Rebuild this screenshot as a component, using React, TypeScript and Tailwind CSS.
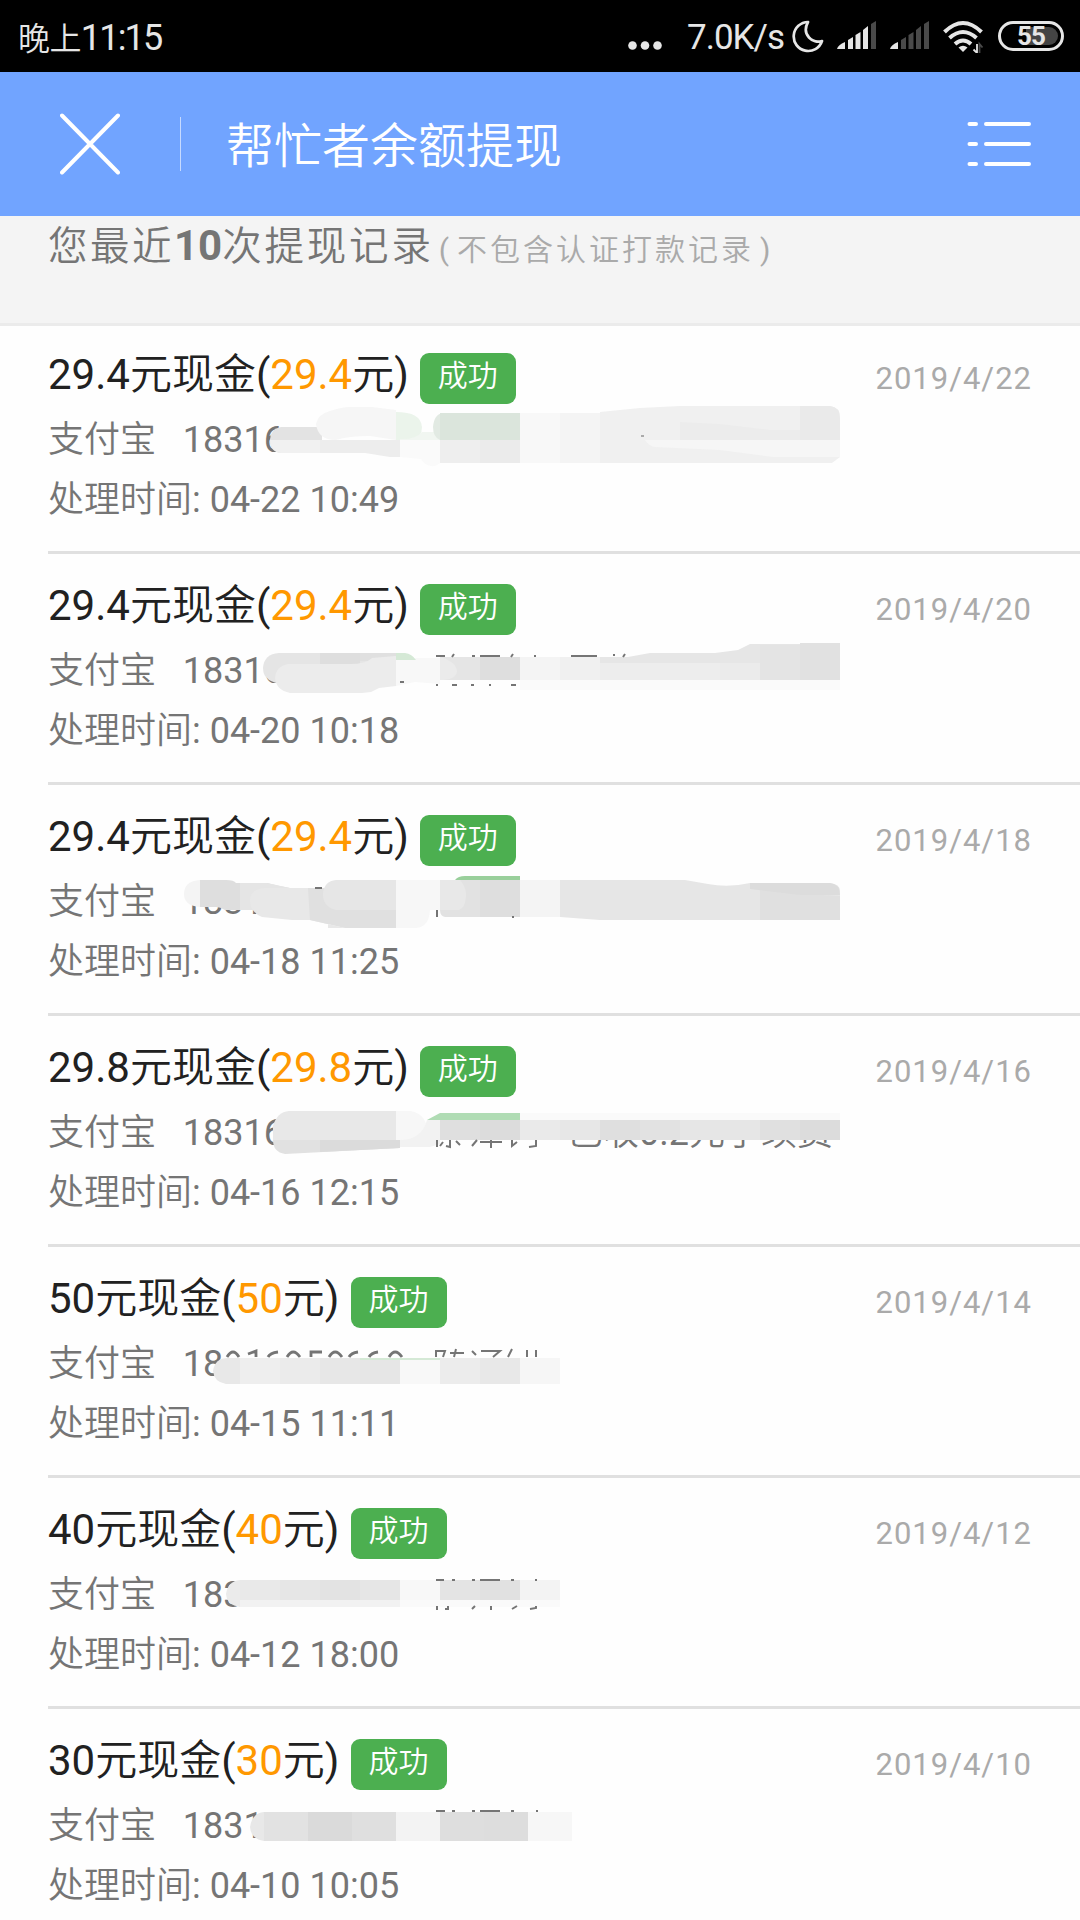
import React from "react";

type Cell = [x: number, y: number, w: number, h: number, fill: string];

const Cells = ({ items }: { items: Cell[] }) => (
  <>
    {items.map(([x, y, w, h, fill], i) => (
      <rect key={i} x={x} y={y} width={w} height={h} fill={fill} shapeRendering="crispEdges" />
    ))}
  </>
);

const Marks = ({ d }: { d: string }) => <path d={d} stroke="#757575" strokeWidth="2" fill="none" />;

const smudges = [
  <>
    <path d="M281 427H322V453H281Q270 452 270 440Q270 429 281 427Z" fill="#e3e3e3" />
    <path d="M270 440H400V457H390L365 453H281Q271 452 270 440Z" fill="#ededed" />
    <path d="M270 440H320V453H281Q271 452 270 440Z" fill="#f1f1f1" />
    <path d="M316 424Q318 414 330 411Q342 407 350 407H372L396 410V440L370 436Q348 436 336 440Q318 440 316 424Z" fill="#f6f6f6" />
    <path d="M396 412Q421 412 422 427Q422 438 412 440H396Z" fill="#ebf4eb" />
    <path d="M422 432H440V440H400V439Q415 440 422 432Z" fill="#f1f6f1" />
    <path d="M400 440H450Q448 459 442 460Q438 467 431 466Q425 465 421 459L400 457Z" fill="#fafafa" />
    <path d="M443 413H520V440H440Q433 437 433 427Q434 414 443 413Z" fill="#e2eae3" />
    <Cells items={[[440, 413, 80, 27, "#dbe5dc"], [440, 440, 40, 23, "#eeeeee"], [480, 440, 40, 23, "#ebebeb"], [520, 413, 40, 50, "#f8f8f8"], [560, 413, 40, 50, "#f4f4f4"]]} />
    <path d="M600 412L640 408L680 406H830Q840 407 840 418V457L832 463H600Z" fill="#f0f0f0" />
    <path d="M680 422L720 424L770 430H840V440H680Z" fill="#ececec" />
    <path d="M800 406H830Q840 407 840 418V440H800Z" fill="#eaeaea" />
    <path d="M645 440H840V457H774L720 450L655 447Q650 447 645 440Z" fill="#f6f6f6" />
    <rect x="641" y="435" width="3" height="2" fill="#aaa" />
  </>,
  <>
    <path d="M279 653H396V684H285Q263 683 263 668Q264 654 279 653Z" fill="#e5e5e5" />
    <Cells items={[[320, 653, 40, 11, "#dedede"], [360, 653, 36, 8, "#e0e0e0"]]} />
    <path d="M288 664H350Q366 664 372 658L396 656V686L379 688L371 692L362 693H290Q276 690 275 678Q276 666 288 664Z" fill="#ececec" />
    <path d="M396 658H440V684L415 682L396 686Z" fill="#f8f8f8" />
    <path d="M396 653H405Q412 654 416 660H396Z" fill="#d5e9d6" />
    <Cells items={[[440, 657, 40, 23, "#e5e5e5"], [480, 657, 40, 23, "#dedede"], [520, 657, 40, 23, "#f4f4f4"], [560, 657, 40, 23, "#f0f0f0"]]} />
    <path d="M440 657Q457 662 457 672Q455 680 440 680Z" fill="#ebebeb" />
    <path d="M600 657H628L650 653H715L738 650L750 644H840V680H600Z" fill="#e6e6e6" />
    <Cells items={[[600, 663, 120, 17, "#ededed"], [720, 663, 40, 17, "#ebebeb"], [760, 645, 40, 35, "#e4e4e4"], [800, 643, 40, 37, "#e1e1e1"], [520, 680, 320, 10, "#fafafa"]]} />
    <Marks d="M436 656H445M452 657L454 654M472 656H475M480 656H500M511 657L513 654M534 656H536M571 656H597M614 656V654M623 657L625 654M436 685H438M452 685H457M471 685H474M489 685H491M511 685H516M400 682H404" />
  </>,
  <>
    <path d="M200 880V907Q184 906 184 894Q184 881 200 880Z" fill="#f4f4f4" />
    <path d="M200 880H226Q234 880 236 883H267Q278 886 290 888V910H225Q220 907 216 907H200Z" fill="#dedede" />
    <path d="M240 883H267L290 888V910H240Z" fill="#e5e5e5" />
    <path d="M264 888H328V928H345L310 920H292L262 917Q250 912 250 900Q251 889 264 888Z" fill="#e8e8e8" />
    <path d="M308 888H396V928H345L310 920Z" fill="#e0e0e0" />
    <path d="M336 880H396V910H336Q323 907 323 894Q324 881 336 880Z" fill="#e6e6e6" />
    <path d="M396 880H440V910H430Q429 927 416 928H396Z" fill="#f7f7f7" />
    <path d="M455 880Q458 876 465 876H520V880Z" fill="#99cf9b" />
    <path d="M440 880H520V917H445Q440 916 440 910Z" fill="#e2e2e2" />
    <path d="M440 880H460Q467 888 466 897Q465 908 459 910H440Z" fill="#e8e8e8" />
    <Cells items={[[480, 880, 40, 37, "#dedede"], [520, 880, 40, 37, "#f4f4f4"]]} />
    <path d="M560 880H685L708 884Q728 888 750 883H830Q840 884 840 891V920H600L560 917Z" fill="#e6e6e6" />
    <path d="M760 885L790 893L840 896V920H760Z" fill="#e0e0e0" />
    <path d="M750 883H830Q840 884 840 895H800L750 889Z" fill="#dcdcdc" />
    <Marks d="M437 910V917M512 917H514M315 888H322" />
  </>,
  <>
    <path d="M289 1111H396V1140H273V1126Q277 1112 289 1111Z" fill="#e8e8e8" />
    <path d="M396 1111H411Q425 1114 427 1128Q424 1138 415 1140H396Z" fill="#f7f7f7" />
    <path d="M273 1140H400V1148L285 1154Q273 1152 273 1140Z" fill="#e1e1e1" />
    <path d="M320 1140H400V1148L320 1152Z" fill="#dbdbdb" />
    <path d="M427 1120H440V1144L430 1147H400V1140Q422 1140 427 1120Z" fill="#f2f2f2" />
    <path d="M427 1120L440 1113H520V1120Z" fill="#b0dcb4" />
    <Cells items={[[440, 1120, 40, 20, "#dfdfdf"], [480, 1120, 40, 20, "#dcdcdc"], [520, 1120, 40, 20, "#eaeaea"], [560, 1120, 40, 20, "#e7e7e7"], [600, 1120, 40, 20, "#dfdfdf"], [640, 1120, 40, 20, "#e2e2e2"], [680, 1120, 80, 20, "#e6e6e6"], [760, 1120, 40, 20, "#e0e0e0"], [800, 1120, 40, 20, "#dcdcdc"], [520, 1113, 320, 7, "#fafafa"]]} />
    <Marks d="M437 1140V1147M450 1140V1147L446 1146M443 1142L440 1146M456 1141L460 1145M472 1146L477 1140M480 1142H502M491 1140V1148M512 1140V1146L517 1142M536 1140V1146L529 1147" />
  </>,
  <>
    <path d="M228 1358H240V1384H226Q214 1382 213 1371Q215 1358 228 1358Z" fill="#e8e8e8" />
    <Cells items={[[240, 1358, 40, 26, "#eeeeee"], [280, 1358, 40, 26, "#ebebeb"], [320, 1358, 40, 26, "#e7e7e7"], [360, 1358, 40, 26, "#e6e6e6"], [400, 1358, 40, 26, "#f8f8f8"], [440, 1358, 40, 26, "#ececec"], [480, 1358, 40, 26, "#e8e8e8"], [520, 1358, 40, 26, "#f6f6f6"], [360, 1358, 80, 2, "#d5e9d6"]]} />
    <g stroke="#757575" strokeWidth="2.800" fill="none">
      <path d="M227 1357Q233 1347 239 1357M248 1354L256 1351V1357M268 1357Q270 1353 278 1352M287 1357Q293 1347 300 1357M311 1357V1352H322M329 1357Q335 1347 342 1357M349 1357Q351 1353 358 1352M369 1357Q371 1353 378 1352M389 1357Q395 1347 402 1357" />
      <path d="M436 1357V1351H445L443 1357M450 1353H464M456 1349L454 1357M472 1351L476 1355M481 1351H500L493 1357M512 1349L508 1357M527 1350V1357M536 1350V1357" strokeWidth="2" />
    </g>
  </>,
  <>
    <path d="M240 1580V1607Q227 1605 226 1594Q228 1581 240 1580Z" fill="#ebebeb" />
    <Cells items={[[240, 1580, 40, 20, "#e9e9e9"], [280, 1580, 40, 20, "#e6e6e6"], [320, 1580, 40, 20, "#e3e3e3"], [360, 1580, 40, 20, "#e6e6e6"], [400, 1580, 40, 20, "#f8f8f8"], [440, 1580, 40, 20, "#e4e4e4"], [480, 1580, 40, 20, "#e1e1e1"], [520, 1580, 40, 20, "#f3f3f3"], [240, 1600, 160, 7, "#f2f2f2"], [400, 1600, 160, 7, "#fafafa"]]} />
    <Marks d="M436 1580H444M452 1580H455M472 1580H475M480 1580H500M511 1580H514M535 1580H537M437 1606V1610M448 1606V1609H445M472 1609L475 1606M491 1606V1610M512 1609L517 1606M536 1606V1608L530 1609" />
  </>,
  <>
    <path d="M264 1812V1841Q251 1839 250 1827Q252 1813 264 1812Z" fill="#e8e8e8" />
    <Cells items={[[264, 1812, 44, 29, "#e2e2e2"], [308, 1812, 44, 29, "#dadada"], [352, 1812, 44, 29, "#dfdfdf"], [396, 1812, 44, 29, "#f3f3f3"], [440, 1812, 44, 29, "#dedede"], [484, 1812, 44, 29, "#dddddd"], [528, 1812, 44, 29, "#f7f7f7"]]} />
    <Marks d="M436 1811H445M452 1811H455M472 1811H475M480 1811H500M511 1811H514M536 1811H538" />
  </>,
];

const records = [
  { amount: "29.4", date: "2019/4/22", account: "18316", time: "04-22 10:49" },
  { amount: "29.4", date: "2019/4/20", account: "18316", time: "04-20 10:18" },
  { amount: "29.4", date: "2019/4/18", account: "1831", time: "04-18 11:25" },
  { amount: "29.8", date: "2019/4/16", account: "18316", note: "已收0.2元手续费", time: "04-16 12:15" },
  { amount: "50", date: "2019/4/14", account: "18", time: "04-15 11:11" },
  { amount: "40", date: "2019/4/12", account: "183", time: "04-12 18:00" },
  { amount: "30", date: "2019/4/10", account: "1831", time: "04-10 10:05" },
];

const FIRST_ROW = 326;
const ROW = 231;

function Record({ index }: { index: number }) {
  const r = records[index];
  return (
    <li className="relative h-[231px] shrink-0 pl-12">
      <div className="h-[228px] border-b-3 border-[#e0e0e0] pr-12">
        <div className="flex h-[92px] items-start pt-[19px]">
          <div className="text-[42px] leading-[60px] whitespace-pre text-[#212121]">
            {r.amount}元现金(<span className="text-[#ff9800]">{r.amount}</span>元)
          </div>
          <span className="mt-[8px] ml-[11.5px] h-[51px] w-24 rounded-[9px] bg-[#4caf50] pr-px text-center text-[30px] leading-[45px] text-white">
            成功
          </span>
          <span className="ml-auto text-[31px] leading-[68px] tracking-[1px] text-[#aaaaaa]">{r.date}</span>
        </div>
        <div className="flex h-[60px] text-[36px] leading-[44px] whitespace-pre text-[#757575]">
          <span>{"支付宝   " + r.account}</span>
          {r.note && <span className="ml-[283px]">{r.note}</span>}
        </div>
        <div className="text-[36px] leading-[44px] whitespace-pre text-[#757575]">处理时间: {r.time}</div>
      </div>
      <svg className="absolute inset-0 h-full w-full" viewBox={`0 ${FIRST_ROW + ROW * index} 1080 ${ROW}`}>
        {smudges[index]}
      </svg>
    </li>
  );
}

function Signal({ active }: { active: number }) {
  const bars = ["M0 28Q1 24 8 21V28Z", "M11 19L16 16V28H11Z", "M18.500 14L23.500 11V28H18.500Z", "M26 9L31 5V28H26Z", "M34 3L39 0V28H34Z"];
  return (
    <svg width="39" height="28" viewBox="0 0 39 28">
      {bars.map((d, i) => (
        <path key={i} d={d} fill={i < active ? "#e6e6e6" : "#4a4a4a"} />
      ))}
    </svg>
  );
}

function StatusBar() {
  return (
    <div className="flex h-18 shrink-0 bg-black pr-4 pl-[18px] text-[#e6e6e6]">
      <span className="pt-[14px] text-[36px] leading-[48px] tracking-[-1.8px]">
        <span className="text-[32px] tracking-[-0.6px]">晚上</span>11:15
      </span>
      <svg className="mt-[41px] ml-auto" width="34" height="9" viewBox="0 0 34 9" fill="#e6e6e6">
        <circle cx="4.500" cy="4.500" r="4.300" />
        <circle cx="17" cy="4.500" r="4.300" />
        <circle cx="29.500" cy="4.500" r="4.300" />
      </svg>
      <span className="ml-[25px] w-[105px] pt-[14px] text-[35px] leading-[48px] tracking-[-1px] whitespace-nowrap">7.0K/s</span>
      <svg className="mt-5" width="32" height="33" viewBox="0 0 32 33" fill="none" stroke="#e6e6e6" strokeWidth="2.700" strokeLinejoin="round">
        <path d="M16 2A14.500 14.500 0 1 0 30 21C21 24 9 15 16 2Z" />
      </svg>
      <div className="mt-[21px] ml-[13px] flex gap-[14px]">
        <Signal active={4} />
        <Signal active={1} />
      </div>
      <svg className="mt-5 ml-[14px]" width="42" height="33" viewBox="0 0 42 33" fill="none" stroke="#e6e6e6" strokeWidth="4">
        <path d="M1.500 12Q20 -6 38.500 12M6.500 18Q20 6 33.500 18M12 24Q20 17 28 24" />
        <path d="M15.500 27.500Q20 24 24.500 27.500L20 32Z" fill="#e6e6e6" stroke="none" />
        <path d="M34 24V33L30.500 29.500" strokeWidth="1.800" />
        <path d="M36.500 33V24L39.500 27.500" stroke="#4a4a4a" strokeWidth="1.800" />
      </svg>
      <div className="relative mt-[21px] ml-[13px] h-[30px] w-[66px] rounded-full border-3 border-[#e6e6e6]">
        <div className="absolute top-[3px] right-[3px] h-[18px] w-[32px] rounded-r-full bg-[#444]" />
        <div className="relative text-center text-[26px] leading-[25px] font-bold tracking-[-1px]">55</div>
      </div>
    </div>
  );
}

export default function App() {
  return (
    <div className="flex h-[1920px] w-[1080px] flex-col overflow-hidden bg-[#fefefe] font-[Roboto,'Noto_Sans_CJK_SC_DemiLight','Noto_Sans_CJK_SC',sans-serif]">
      <StatusBar />
      <header className="flex h-36 shrink-0 items-center bg-[#71a4ff] px-12 text-white">
        <svg className="ml-3" width="60" height="62" viewBox="0 0 60 62" stroke="white" strokeWidth="4" strokeLinecap="round">
          <path d="M2 2.500L58 59.500M58 2.500L2 59.500" />
        </svg>
        <div className="ml-[60px] h-[54px] w-px bg-white/60" />
        <h1 className="mt-[5px] ml-[45px] text-[48px] leading-[72px]">帮忙者余额提现</h1>
        <svg className="ml-auto" width="65" height="44" viewBox="0 0 65 44" stroke="white" strokeWidth="4" strokeLinecap="round">
          <path d="M2.500 2H9M19 2H62M2.500 22H9M19 22H62M2.500 42H9M19 42H62" />
        </svg>
      </header>
      <div className="h-[110px] shrink-0 border-b-3 border-[#ebebeb] bg-[#f4f4f4] pl-12 whitespace-nowrap text-[#757575]">
        <div className="leading-[59px]">
          <span className="text-[39.5px] tracking-[2.5px]">您最近</span>
          <span className="text-[42px] font-bold">10</span>
          <span className="text-[39.5px] tracking-[2.8px]">次提现记录</span>
          <span className="ml-[5px] text-[30px] tracking-[3px] text-[#aaaaaa]">
            (<span className="mr-[6px] ml-[5px]">不包含认证打款记录</span>)
          </span>
        </div>
      </div>
      <ul className="flex flex-col">
        {records.map((_, i) => (
          <Record key={i} index={i} />
        ))}
      </ul>
    </div>
  );
}
